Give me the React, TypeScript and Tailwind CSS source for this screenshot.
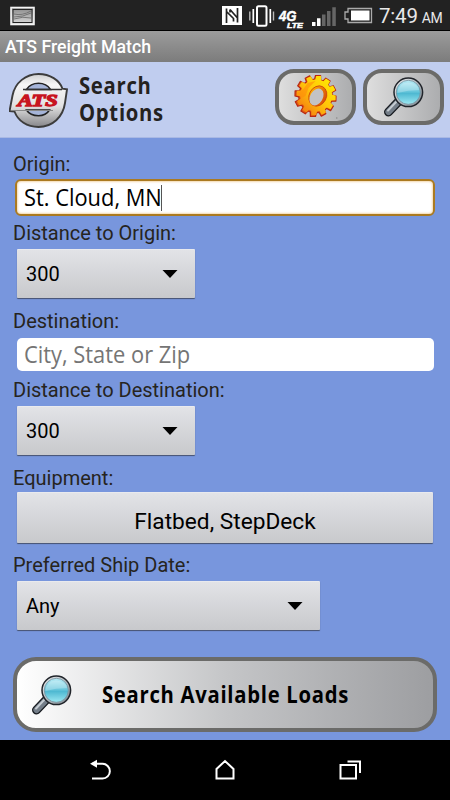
import React from 'react';

const ROBOTO = "font-['Roboto',sans-serif]";
const DROID = "font-['Open_Sans','Noto_Sans',sans-serif]";

const StatusBar: React.FC = () => (
  <div className="flex h-[31px] items-start border-b border-black bg-[#222222]">
    <svg width="26" height="20" viewBox="10 6 26 20" className="ml-[10px] mt-[6px]">
      <defs>
        <linearGradient id="photo" x1="0" y1="0" x2="0" y2="1">
          <stop offset="0" stopColor="#888" />
          <stop offset="1" stopColor="#ddd" />
        </linearGradient>
      </defs>
      <rect x="11" y="7.5" width="23" height="17" fill="url(#photo)" stroke="#f4f4f4" strokeWidth="1.6" />
      <rect x="13" y="9.5" width="19" height="13" fill="none" stroke="#222" strokeWidth="1" />
      <path d="M14 14q8 2 17-3M14 17q9 0 17-4M14 19q9-3 17-1" fill="none" stroke="#666" strokeWidth=".8" />
    </svg>

    <div className="ml-auto flex">
      <svg width="154" height="30" viewBox="221 0 154 30">
        {/* NFC */}
        <path d="M222 6h20v19h-20z" fill="#fff" />
        <path d="M226.500 23V8.500M226.500 11.500L233.500 18.500V21.500M230 9.500L237.500 18M237.500 8V22.500M230 9.500V12.500" fill="none" stroke="#222" strokeWidth="1.700" />
        {/* Vibrate */}
        <rect x="257" y="6.200" width="9.500" height="19.500" rx="1.500" fill="none" stroke="#fff" strokeWidth="2" />
        <path d="M253.300 9v14M270.300 9v14" stroke="#fff" strokeWidth="1.700" />
        <path d="M249.800 11.500v9M273.500 11.500v9" stroke="#bbb" strokeWidth="1.400" />
        {/* Network type */}
        <g fill="#fff" stroke="#fff" strokeWidth=".5" fontFamily="Liberation Sans, sans-serif" fontWeight="bold" fontStyle="italic">
          <text x="279" y="20.500" fontSize="14.500" textLength="17.500" lengthAdjust="spacingAndGlyphs">4G</text>
          <text x="287" y="27.500" fontSize="7.500" textLength="16" lengthAdjust="spacingAndGlyphs">LTE</text>
        </g>
        {/* Signal */}
        <path d="M312 22h3.500v4H312zM317 18.300h3.500V26H317z" fill="#fff" />
        <path d="M322 14.600h3.500V26H322zM327 11h3.500v15H327zM332.300 7.300h3.500V26h-3.500z" fill="#666" />
        {/* Battery */}
        <path d="M348 8.500h23.500v14H348v-3.500h-3v-7h3z" fill="none" stroke="#aaa" strokeWidth="1.300" />
        <path d="M351 10.500h18.500v10H351z" fill="#fff" />
      </svg>
      <div className={`${ROBOTO} flex w-[75px] items-baseline pl-1 leading-[33px] text-[#e8e8e8]`}>
        <span className="text-[20.5px] tracking-[-0.2px]">7:49</span>
        <span className="ml-1 text-[14px] tracking-[-0.3px]">AM</span>
      </div>
    </div>
  </div>
);

const Logo: React.FC = () => (
  <svg width="60" height="56" viewBox="9 72 60 56" className="ml-[9px] shrink-0">
    <defs>
      <linearGradient id="chrome" x1="0" y1="0" x2="0" y2="1">
        <stop offset="0" stopColor="#d0d0d0" />
        <stop offset=".2" stopColor="#f6f6f6" />
        <stop offset=".6" stopColor="#e2e2e2" />
        <stop offset="1" stopColor="#86868a" />
      </linearGradient>
    </defs>
    <path
      d="M38.500 74C50 74 59.500 80 62.500 88.700L67 89.300L65 103C63 117 52.500 127 38.500 127C27 127 18 121 14.500 111.500L9.500 111.200L12.500 95.500C15 82.500 26 74 38.500 74Z"
      fill="url(#chrome)"
      stroke="#3c3c3c"
      strokeWidth="1.900"
    />
    <path d="M26.500 89.500C29 85.500 33 83.300 38.500 83.300S48 85.500 50.500 89.500Z" fill="#a5b4d8" stroke="#222" strokeWidth="1.500" />
    <path d="M26.500 110C29 114 33 115.800 38.500 115.800S47 114 49.500 110Z" fill="#a5b4d8" stroke="#222" strokeWidth="1.500" />
    <path d="M23 89.500H62" stroke="#333" strokeWidth="1.500" />
    <path d="M15 110.500H53" stroke="#888" />
    <text
      x="17.800"
      y="105.800"
      fontSize="17.500"
      fontFamily="Liberation Serif, serif"
      fontWeight="bold"
      fontStyle="italic"
      fill="#c8151f"
      stroke="#c8151f"
      strokeWidth="1.300"
      textLength="40"
      lengthAdjust="spacingAndGlyphs"
    >
      ATS
    </text>
  </svg>
);

const gearPoints = Array.from({ length: 12 }, (_, i) =>
  [[-11, 16.800], [-8, 20.500], [6, 21], [10, 16.800]].map(([deg, r]) => {
    const a = ((i * 30 + deg + 8) * Math.PI) / 180;
    return `${(22 + r * Math.cos(a)).toFixed(1)},${(22 + r * Math.sin(a)).toFixed(1)}`;
  }).join(' ')
).join(' ');

const Gear: React.FC = () => (
  <svg width="44" height="44" viewBox="0.500 1 44 44">
    <defs>
      <linearGradient id="gold" x1="0.900" y1="0.100" x2="0.100" y2="0.900">
        <stop offset="0" stopColor="#ffe800" />
        <stop offset=".5" stopColor="#ffc60a" />
        <stop offset="1" stopColor="#f47a10" />
      </linearGradient>
      <linearGradient id="rim" x1="0" y1="0" x2="1" y2="0">
        <stop offset="0" stopColor="#ffb000" />
        <stop offset="1" stopColor="#d94d0c" />
      </linearGradient>
    </defs>
    <polygon points={gearPoints} fill="#e05a10" stroke="#b92812" strokeWidth="1.200" strokeLinejoin="round" />
    <polygon points={gearPoints} transform="translate(1.800 .6) scale(.95)" fill="url(#gold)" strokeLinejoin="round" />
    <path d="M4 19L10 15L14 9L22 7L15 14L12 22L8 24Z" fill="#ff8c0a" opacity=".6" />
    <ellipse cx="24.300" cy="22" rx="8.600" ry="10.500" transform="rotate(28 24.300 22)" fill="url(#rim)" stroke="#c9420e" strokeWidth=".8" />
    <ellipse cx="23" cy="23" rx="6.300" ry="9" transform="rotate(30 23 23)" fill="#c3c3c5" />
    <circle cx="43.300" cy="44" r=".8" fill="#888" />
  </svg>
);

const Magnifier: React.FC = () => (
  <svg width="42" height="42" viewBox="0 0 42 42" className="shrink-0 overflow-visible">
    <defs>
      <linearGradient id="lens" x1="0" y1="0" x2="0" y2="1">
        <stop offset="0" stopColor="#b9ecf6" />
        <stop offset=".45" stopColor="#6cc8dd" />
        <stop offset=".55" stopColor="#4fb9d2" />
        <stop offset="1" stopColor="#9ce8f2" />
      </linearGradient>
      <linearGradient id="ring" x1="0" y1="0" x2="1" y2="1">
        <stop offset="0" stopColor="#f2f4f6" />
        <stop offset="1" stopColor="#77828b" />
      </linearGradient>
    </defs>
    <path d="M4.500 36L14.500 25.500" stroke="#171b20" strokeWidth="9" strokeLinecap="round" />
    <path d="M4.500 36L15 25" stroke="#737d88" strokeWidth="6.200" strokeLinecap="round" />
    <path d="M4 34.500L13 25" stroke="#c5ccd2" strokeWidth="2" strokeLinecap="round" />
    <circle cx="24.300" cy="16.300" r="14.300" fill="url(#ring)" stroke="#20242a" strokeWidth="1.500" />
    <circle cx="24.300" cy="16.300" r="12" fill="url(#lens)" stroke="#77909d" strokeWidth=".8" />
    <path d="M13.500 17Q14 7 24 6.500Q34 7 35 14Q24 14 13.500 17Z" fill="#fff" opacity=".25" />
  </svg>
);

const Label: React.FC<{ className: string; children: React.ReactNode }> = ({ className, children }) => (
  <div className={`${ROBOTO} ml-[13px] h-6 text-[20px] leading-6 whitespace-nowrap text-[#262420] ${className}`}>
    {children}
  </div>
);

const Select: React.FC<{ value: string; className: string }> = ({ value, className }) => (
  <div
    className={`${ROBOTO} ml-[17px] mt-1 flex h-[49px] items-center justify-between rounded-[1px] border-t border-[#e9eaee] bg-linear-to-b from-[#e2e3e7] to-[#c8c9cc] pr-[17px] pl-[9px] text-[20px] text-black shadow-[0_1px_1px_#46526f] ${className}`}
  >
    <span>{value}</span>
    <svg width="16" height="8" viewBox="0 0 16 8">
      <path d="M.5 0h15L8 8z" />
    </svg>
  </div>
);

const iconButton =
  'flex h-14 w-[81px] items-center justify-center rounded-[19px] border-4 border-[#6b6b69] bg-linear-to-r from-[#dedede] to-[#acadaf]';

const App: React.FC = () => {
  return (
    <div className="flex h-[800px] w-[450px] flex-col overflow-hidden bg-[#7896dd]">
      <StatusBar />

      <div className={`${ROBOTO} h-[31px] bg-linear-to-b from-[#9c9c9c] to-[#7c7c7c] pl-[5px] text-[17.7px] leading-[32px] font-medium text-white`}>
        ATS Freight Match
      </div>

      <header className="flex h-[76px] items-center border-b border-[#a9b9e4] bg-[#c0cdef]">
        <Logo />
        <h1 className={`${DROID} ml-[10px] text-[22.5px] leading-[26.5px] font-bold tracking-[0.8px] text-[#24221f]`}>
          <span className="block origin-left scale-x-[0.9]">Search</span>
          <span className="block origin-left scale-x-[0.9]">Options</span>
        </h1>
        <div className="mr-[6px] mb-[6px] ml-auto flex gap-[7px]">
          <button className={iconButton}>
            <Gear />
          </button>
          <button className={`${iconButton} pl-[2px]`}>
            <Magnifier />
          </button>
        </div>
      </header>

      <main className="flex flex-col pt-[14px]">
        <Label className="">Origin:</Label>
        <div className={`${DROID} mx-[15px] mt-[3px] flex h-[37px] items-center rounded-[6px] border-2 border-[#ab7a20] bg-white pl-[7px] text-[23px] text-black shadow-[inset_0_0_2px_1px_#f5d9b0]`}>
          <span className="w-[137px] whitespace-nowrap">
            <span className="inline-block origin-left scale-x-[0.95]">St. Cloud, MN</span>
          </span>
          <span className="h-[26px] w-px bg-[#555]" />
        </div>

        <Label className="mt-[5px]">Distance to Origin:</Label>
        <Select value="300" className="w-[178px]" />

        <Label className="mt-[11px]">Destination:</Label>
        <div className={`${DROID} mr-4 ml-[17px] mt-[5px] flex h-[33px] items-center rounded-[5px] bg-white pl-[7px] text-[23px] text-[#757575]`}>
          <span className="origin-left scale-x-[0.95] whitespace-nowrap">City, State or Zip</span>
        </div>

        <Label className="mt-[7px]">Distance to Destination:</Label>
        <Select value="300" className="w-[178px]" />

        <Label className="mt-[11px]">Equipment:</Label>
        <button className={`${ROBOTO} mr-[17px] ml-[17px] mt-[2px] h-[51px] rounded-[1px] border-t border-[#e9eaee] bg-linear-to-b from-[#e2e3e7] to-[#c8c9cc] pt-[9px] text-[22.7px] text-black shadow-[0_1px_1px_#46526f]`}>
          Flatbed, StepDeck
        </button>

        <Label className="mt-[10px]">Preferred Ship Date:</Label>
        <Select value="Any" className="w-[303px]" />

        <button className={`${DROID} mx-[13px] mt-[27px] flex h-[75px] items-center rounded-[23px] border-4 border-[#6b6b69] bg-linear-to-r from-white via-[#c5c6c8] to-[#9d9ea1] pl-[15px] text-[22.5px] font-bold text-black`}>
          <Magnifier />
          <span className="ml-[28px] origin-left scale-x-[0.9] tracking-[0.8px] whitespace-nowrap">Search Available Loads</span>
        </button>
      </main>

      <nav className="mt-auto flex h-[60px] bg-black">
        <svg width="450" height="60" viewBox="0 740 450 60" fill="none" stroke="#fff" strokeWidth="2">
          <path d="M92 763.800h10.500a7.300 7.300 0 0 1 0 14.700H92" />
          <path d="M90 763.800l7-4v8z" fill="#fff" stroke="none" />
          <path d="M216.500 778.500v-9.500l8.500-8 8.500 8v9.500z" />
          <path d="M340.500 765h15.500v13.500h-15.500z" />
          <path d="M347.500 761.500h12.500v11.500" />
        </svg>
      </nav>
    </div>
  );
};

export default App;
